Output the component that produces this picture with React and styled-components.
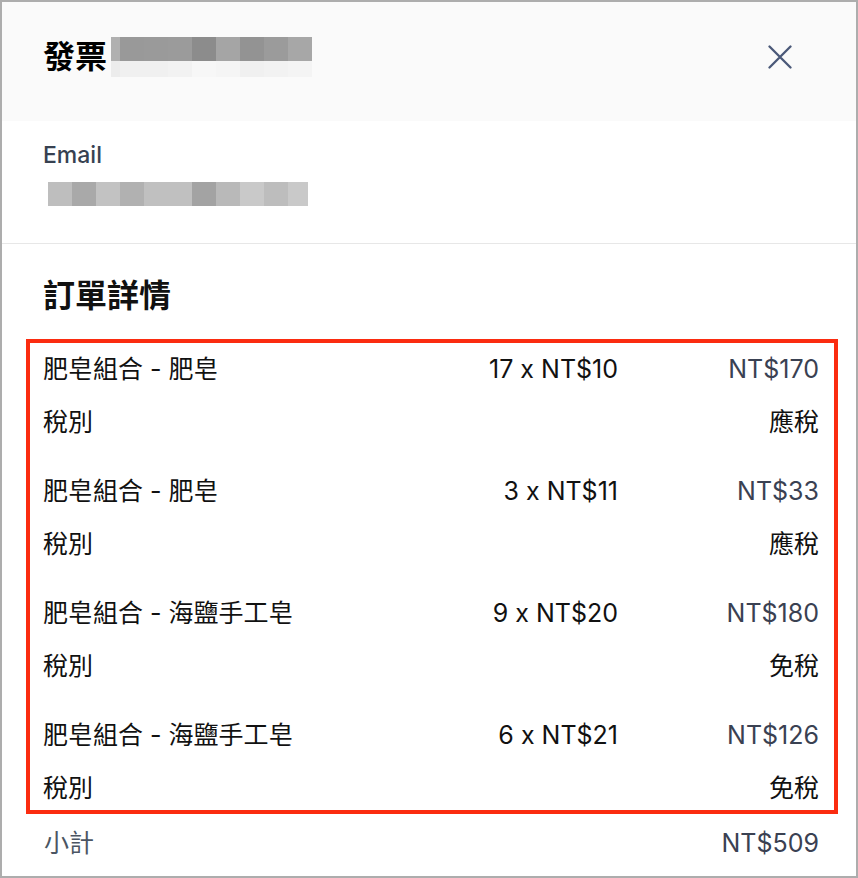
import React from "react";
import styled, { createGlobalStyle } from "styled-components";

const GlobalStyle = createGlobalStyle`
  html, body { margin: 0; padding: 0; background: #ffffff; }
  body { font-family: Inter, "Noto Sans CJK TC", sans-serif; }
  * { box-sizing: border-box; }
`;

const Panel = styled.div`
  width: 858px;
  height: 878px;
  border: 2px solid #adadad;
  background: #ffffff;
  display: flex;
  flex-direction: column;
  overflow: hidden;
  font-family: Inter, "Noto Sans CJK TC", sans-serif;
`;

const Header = styled.header`
  height: 119px;
  flex-shrink: 0;
  background: #fafafa;
  display: flex;
  align-items: center;
  justify-content: space-between;
  padding: 0 64px 9px 41px;
`;

const TitleGroup = styled.div`
  display: flex;
  align-items: center;
  gap: 4px;
`;

const Title = styled.h1`
  margin: 0;
  font-size: 32px;
  line-height: 40px;
  font-weight: 700;
  color: #000000;
  font-family: Inter, "Noto Sans CJK TC", sans-serif;
`;

const CloseButton = styled.button`
  border: 0;
  padding: 0;
  background: transparent;
  width: 24px;
  height: 24px;
  display: flex;
  cursor: pointer;
  color: #4a5878;
`;

const EmailSection = styled.section`
  padding: 19px 37px 37px 41px;
  border-bottom: 1px solid #e7e7e7;
  display: flex;
  flex-direction: column;
  align-items: flex-start;
`;

const Label = styled.div`
  font-size: 23px;
  line-height: 30px;
  color: #374151;
  font-weight: 500;
`;

const MosaicWrap = styled.div`
  margin-top: ${(p) => p.$mt || 0}px;
  margin-left: ${(p) => p.$ml || 0}px;
  display: flex;
`;

const OrderSection = styled.section`
  padding: 32px 37px 0 42px;
  display: flex;
  flex-direction: column;
`;

const SectionTitle = styled.h2`
  margin: 0 0 23px -1px;
  font-size: 32px;
  line-height: 40px;
  font-weight: 700;
  color: #111111;
  font-family: Inter, "Noto Sans CJK TC", sans-serif;
`;

const ItemList = styled.div`
  margin: 0 -19px 0 -18px;
  border: 4px solid #fb2c10;
  padding: 8px 15px 4px 13px;
  display: flex;
  flex-direction: column;
  gap: 33px;
`;

const ItemGroup = styled.div`
  display: flex;
  flex-direction: column;
  gap: 17px;
`;

const ItemRow = styled.div`
  display: grid;
  grid-template-columns: 1fr auto 201px;
  align-items: center;
  height: 36px;
  font-size: 25px;
  line-height: 36px;
`;

const ItemName = styled.span`
  color: #111111;
  white-space: nowrap;
`;

const Qty = styled.span`
  color: #111111;
  text-align: right;
  white-space: nowrap;
`;

const Amount = styled.span`
  color: ${(p) => (p.$muted ? "#3a4152" : "#111111")};
  text-align: right;
  white-space: nowrap;
`;

const SplitRow = styled.div`
  display: flex;
  justify-content: space-between;
  align-items: center;
  height: 36px;
  font-size: 25px;
  line-height: 36px;
  color: ${(p) => p.$color || "#111111"};
  margin-top: ${(p) => p.$mt || 0}px;
`;

const Mosaic = ({ rows, widths }) => {
  const width = widths.reduce((a, b) => a + b, 0);
  let height = 0;
  rows.forEach((r) => (height += r.h));
  let y = 0;
  return (
    <svg width={width} height={height} viewBox={`0 0 ${width} ${height}`}>
      {rows.map((r, ri) => {
        const ry = y;
        y += r.h;
        let x = 0;
        return r.colors.map((c, ci) => {
          const rx = x;
          x += widths[ci];
          return <rect key={`${ri}-${ci}`} x={rx} y={ry} width={widths[ci]} height={r.h} fill={c} />;
        });
      })}
    </svg>
  );
};

const titleMosaic = [
  { h: 24, colors: ["#b0b0b0", "#999999", "#9a9a9a", "#9b9b9b", "#8c8c8c", "#a5a5a5", "#939393", "#9b9b9b", "#a7a7a7"] },
  { h: 16, colors: ["#ececec", "#f0f0f0", "#f0f0f0", "#f2f2f2", "#f7f7f7", "#f5f5f5", "#f0f0f0", "#f2f2f2", "#f4f4f4"] },
];
const titleWidths = [9, 24, 24, 24, 24, 24, 24, 24, 24];

const emailMosaic = [
  { h: 24, colors: ["#bebebe", "#a9a9a9", "#c2c2c2", "#b1b1b1", "#c0c0c0", "#c0c0c0", "#a3a3a3", "#b9b9b9", "#c9c9c9", "#bdbdbd", "#c9c9c9"] },
];
const emailWidths = [24, 24, 24, 24, 24, 24, 24, 24, 24, 24, 20];

const items = [
  { name: "肥皂組合 - 肥皂", qty: "17 x NT$10", amount: "NT$170", tax: "應稅" },
  { name: "肥皂組合 - 肥皂", qty: "3 x NT$11", amount: "NT$33", tax: "應稅" },
  { name: "肥皂組合 - 海鹽手工皂", qty: "9 x NT$20", amount: "NT$180", tax: "免稅" },
  { name: "肥皂組合 - 海鹽手工皂", qty: "6 x NT$21", amount: "NT$126", tax: "免稅" },
];

export default function App() {
  return (
    <>
      <GlobalStyle />
      <Panel>
        <Header>
          <TitleGroup>
            <Title>發票</Title>
            <MosaicWrap>
              <Mosaic rows={titleMosaic} widths={titleWidths} />
            </MosaicWrap>
          </TitleGroup>
          <CloseButton aria-label="close">
            <svg width="24" height="24" viewBox="0 0 24 24" fill="none">
              <path d="M1.5 1.5 L22.5 22.5 M22.5 1.5 L1.5 22.5" stroke="currentColor" strokeWidth="2.3" strokeLinecap="round" />
            </svg>
          </CloseButton>
        </Header>

        <EmailSection>
          <Label>Email</Label>
          <MosaicWrap $mt={12} $ml={5}>
            <Mosaic rows={emailMosaic} widths={emailWidths} />
          </MosaicWrap>
        </EmailSection>

        <OrderSection>
          <SectionTitle>訂單詳情</SectionTitle>
          <ItemList>
            {items.map((it, i) => (
              <ItemGroup key={i}>
                <ItemRow>
                  <ItemName>{it.name}</ItemName>
                  <Qty>{it.qty}</Qty>
                  <Amount $muted>{it.amount}</Amount>
                </ItemRow>
                <SplitRow>
                  <span>稅別</span>
                  <span>{it.tax}</span>
                </SplitRow>
              </ItemGroup>
            ))}
          </ItemList>
          <SplitRow $color="#4b5563" $mt={11}>
            <span>小計</span>
            <Amount $muted>NT$509</Amount>
          </SplitRow>
        </OrderSection>
      </Panel>
    </>
  );
}
